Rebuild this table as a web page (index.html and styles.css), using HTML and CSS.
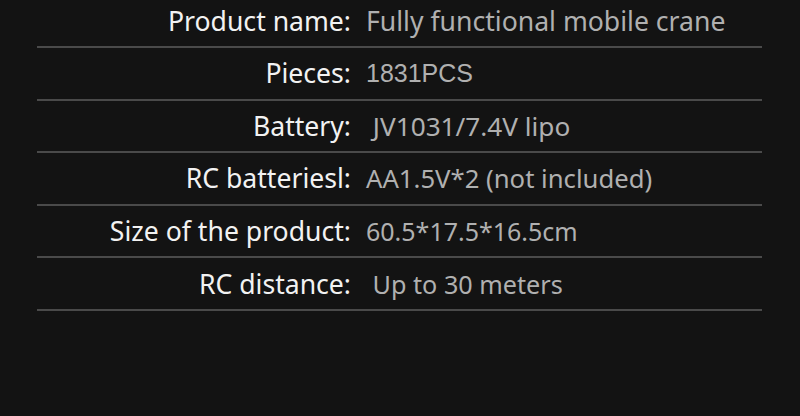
FILE: index.html
```html
<!DOCTYPE html>
<html>
<head>
<meta charset="utf-8">
<link rel="stylesheet" href="styles.css">
</head>
<body>
<div class="specs">
  <div class="row"><div class="label">Product name:</div><div class="value">Fully functional mobile crane</div></div>
  <div class="row"><div class="label">Pieces:</div><div class="value arial">1831PCS</div></div>
  <div class="row"><div class="label">Battery:</div><div class="value v-battery">&nbsp;JV1031/7.4V lipo</div></div>
  <div class="row"><div class="label">RC batteriesl:</div><div class="value v-aa">AA1.5V*2 (not included)</div></div>
  <div class="row"><div class="label">Size of the product:</div><div class="value v-size">60.5*17.5*16.5cm</div></div>
  <div class="row"><div class="label">RC distance:</div><div class="value v-dist">&nbsp;Up to 30 meters</div></div>
</div>
</body>
</html>
```
FILE: styles.css
```css
html, body {
  margin: 0;
  padding: 0;
  background: #131313;
  height: 100%;
}
body {
  font-family: "Noto Sans", "Open Sans", sans-serif;
}
.specs {
  margin: -4.6px 38px 0 37px;
  display: flex;
  flex-direction: column;
}
.row {
  height: 50.6px;
  border-bottom: 2px solid #4a4a4a;
  display: grid;
  grid-template-columns: 314px 1fr;
  column-gap: 15px;
  align-items: center;
}
.label {
  text-align: right;
  color: #f2f2f2;
  font-size: 26.6px;
  white-space: nowrap;
}
.value {
  color: #b0b0b0;
  font-size: 26.6px;
  white-space: nowrap;
}
.value.arial {
  font-family: "Liberation Sans", Arial, sans-serif;
  font-size: 25px;
}
.value.v-battery { font-size: 26.2px; }
.value.v-aa { font-size: 25.7px; }
.value.v-size { font-size: 25px; }
.value.v-dist { font-size: 25.2px; }
```
